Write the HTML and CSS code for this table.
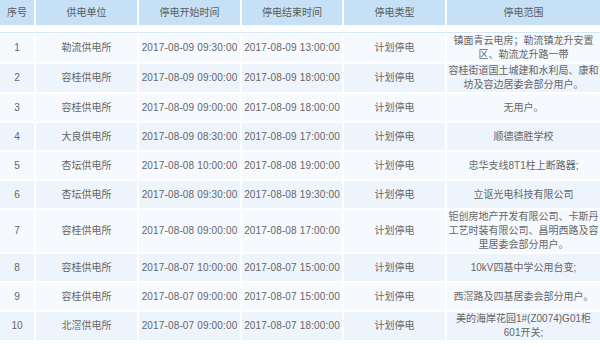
FILE: index.html
```html
<!DOCTYPE html>
<html lang="zh-CN">
<head>
<meta charset="utf-8">
<title>停电信息</title>
<link rel="stylesheet" href="styles.css">
</head>
<body>
<table class="grid">
  <colgroup>
    <col class="c-no">
    <col class="c-unit">
    <col class="c-start">
    <col class="c-end">
    <col class="c-type">
    <col class="c-range">
  </colgroup>
  <thead>
    <tr>
      <th>序号</th>
      <th>供电单位</th>
      <th>停电开始时间</th>
      <th>停电结束时间</th>
      <th>停电类型</th>
      <th>停电范围</th>
    </tr>
  </thead>
  <tbody class="spacer">
    <tr><td colspan="6"></td></tr>
  </tbody>
  <tbody class="rows">
    <tr><td>1</td><td>勒流供电所</td><td>2017-08-09 09:30:00</td><td>2017-08-09 13:00:00</td><td>计划停电</td><td>镇面青云电房；勒流镇龙升安置区、勒流龙升路一带</td></tr>
    <tr><td>2</td><td>容桂供电所</td><td>2017-08-09 09:00:00</td><td>2017-08-09 18:00:00</td><td>计划停电</td><td>容桂街道国土城建和水利局、康和坊及容边居委会部分用户。</td></tr>
    <tr><td>3</td><td>容桂供电所</td><td>2017-08-09 09:00:00</td><td>2017-08-09 18:00:00</td><td>计划停电</td><td>无用户。</td></tr>
    <tr><td>4</td><td>大良供电所</td><td>2017-08-09 08:30:00</td><td>2017-08-09 17:00:00</td><td>计划停电</td><td>顺德德胜学校</td></tr>
    <tr><td>5</td><td>杏坛供电所</td><td>2017-08-08 10:00:00</td><td>2017-08-08 19:00:00</td><td>计划停电</td><td>忠华支线8T1柱上断路器;</td></tr>
    <tr><td>6</td><td>杏坛供电所</td><td>2017-08-08 09:30:00</td><td>2017-08-08 19:30:00</td><td>计划停电</td><td>立讴光电科技有限公司</td></tr>
    <tr><td>7</td><td>容桂供电所</td><td>2017-08-08 09:00:00</td><td>2017-08-08 17:00:00</td><td>计划停电</td><td>钜创房地产开发有限公司、卡斯丹工艺时装有限公司、昌明西路及容里居委会部分用户。</td></tr>
    <tr><td>8</td><td>容桂供电所</td><td>2017-08-07 10:00:00</td><td>2017-08-07 15:00:00</td><td>计划停电</td><td>10kV四基中学公用台变;</td></tr>
    <tr><td>9</td><td>容桂供电所</td><td>2017-08-07 09:00:00</td><td>2017-08-07 15:00:00</td><td>计划停电</td><td>西滘路及四基居委会部分用户。</td></tr>
    <tr><td>10</td><td>北滘供电所</td><td>2017-08-07 09:00:00</td><td>2017-08-07 18:00:00</td><td>计划停电</td><td>美的海岸花园1#(Z0074)G01柜601开关;</td></tr>
  </tbody>
</table>
</body>
</html>
```

FILE: styles.css
```css
html, body {
  margin: 0;
  padding: 0;
  background: #ffffff;
  overflow: hidden;
}

.grid {
  border-collapse: separate;
  border-spacing: 0;
  table-layout: fixed;
  width: 600px;
  font-family: "Liberation Sans", "Noto Sans CJK SC", sans-serif;
  font-size: 10px;
  color: #666666;
}

.c-no { width: 36px; }
.c-unit { width: 103px; }
.c-start { width: 103px; }
.c-end { width: 102px; }
.c-type { width: 103px; }
.c-range { width: 153px; }

.grid th {
  background: #c6e0f5;
  height: 25px;
  padding: 0;
  font-weight: normal;
  color: #5a5a5a;
  text-align: center;
  line-height: 14px;
  border-right: 2px solid #ffffff;
}

.grid th:last-child {
  border-right: 0;
}

.spacer td {
  height: 7px;
  padding: 0;
  border-bottom: 1px solid #d4e6f7;
}

.rows td {
  height: 27px;
  padding: 0 1px;
  line-height: 14px;
  text-align: center;
  vertical-align: middle;
  border-right: 2px solid #ffffff;
  border-bottom: 2px solid #ffffff;
  background: #f6f9fe;
}

.rows td:nth-child(3),
.rows td:nth-child(4) {
  letter-spacing: 0.15px;
}

.rows tr:first-child td {
  border-top: 1px solid #ffffff;
}

.rows tr:nth-child(even) td {
  background: #edf4fc;
}

.rows td:last-child {
  border-right: 0;
}
```
